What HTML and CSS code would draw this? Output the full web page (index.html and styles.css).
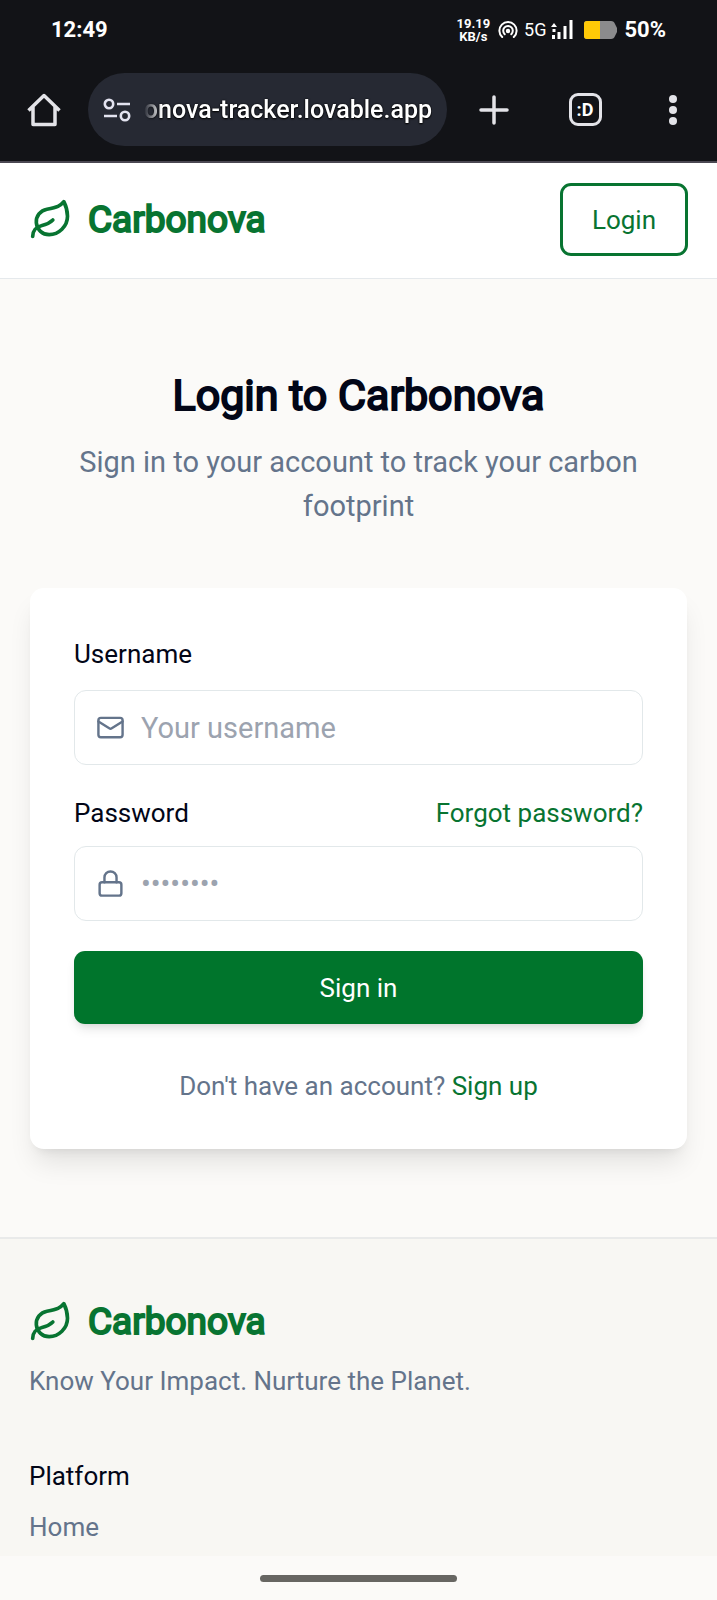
FILE: index.html
```html
<!DOCTYPE html>
<html lang="en">
<head>
<meta charset="utf-8">
<meta name="viewport" content="width=device-width, initial-scale=1">
<title>Login to Carbonova</title>
<link rel="stylesheet" href="styles.css">
</head>
<body>
<div class="chrome">
  <div class="status">
    <span class="clock">12:49</span>
    <div class="indicators">
      <span class="speed">19.19<br>KB/s</span>
      <svg class="hotspot" viewBox="0 0 20 18" fill="none" stroke="#fff" stroke-width="2" stroke-linecap="round"><path d="M4.200 16A8.600 8.600 0 1 1 15.800 16"/><path d="M6.700 13.200A4.800 4.800 0 1 1 13.300 13.200"/><circle cx="10" cy="10" r="1.200" fill="#fff"/></svg>
      <span class="network">5G</span>
      <svg class="signal" viewBox="0 0 22 20" fill="#fff"><path d="M0 7l3-4 3 4zM1.500 9h3v3h-3zM1 15h3v4H1zM6.500 12h3v7h-3zM12.500 6h3v13h-3zM18.500 0h3v19h-3z"/></svg>
      <svg class="battery" viewBox="0 0 34 18"><path fill="#8b8b8d" d="M3 0h24q3 0 4 3l2 4v4l-2 4q-1 3-4 3H3q-3 0-3-3V3q0-3 3-3z"/><path fill="#ffc907" d="M3 0h13v18H3q-3 0-3-3V3q0-3 3-3z"/></svg>
      <span class="percent">50%</span>
    </div>
  </div>
  <div class="toolbar">
    <button class="tool" aria-label="Home"><svg width="34" height="34" viewBox="0 0 34 34" fill="none" stroke="#e3e3e8" stroke-width="3.500" stroke-linejoin="round"><path d="M1.500 17.500L17 2.500l15.500 15M6 14v17.500h22V14"/></svg></button>
    <div class="address">
      <svg width="28" height="24" viewBox="0 0 28 24" fill="none" stroke="#e3e3f0" stroke-width="2.600"><circle cx="6" cy="6" r="4.200"/><path d="M14 6h13M1 18h13"/><circle cx="22" cy="18" r="4.200"/></svg>
      <span class="url">onova-tracker.lovable.app</span>
    </div>
    <button class="tool tool-wide" aria-label="New tab"><svg width="30" height="30" viewBox="0 0 30 30" stroke="#e3e3e8" stroke-width="3.500" stroke-linecap="round"><path d="M15 2v26M2 15h26"/></svg></button>
    <button class="tool" aria-label="Open tabs"><span class="tabs">:D</span></button>
    <button class="tool" aria-label="More options"><svg width="8" height="30" viewBox="0 0 8 30" fill="#e3e3e8"><circle cx="4" cy="4" r="4"/><circle cx="4" cy="15" r="4"/><circle cx="4" cy="26" r="4"/></svg></button>
  </div>
</div>

<header class="site-header">
  <a class="brand" href="#"><svg class="leaf" viewBox="0 0 24 24"><path d="M11 20A7 7 0 0 1 9.800 6.100C15.500 5 17 4.480 19 2c1 2 2 4.180 2 8 0 5.500-4.780 10-10 10Z"/><path d="M2 21c0-3 1.850-5.360 5.080-6C9.500 14.520 12 13 13 12"/></svg><span>Carbonova</span></a>
  <button class="login">Login</button>
</header>

<main class="main">
  <h1>Login to Carbonova</h1>
  <p class="subtitle">Sign in to your account to track your carbon footprint</p>
  <form class="card">
    <div class="label-row"><label for="username">Username</label></div>
    <div class="field">
      <svg class="field-icon" viewBox="0 0 24 24"><rect x="2" y="4" width="20" height="16" rx="2"/><path d="m22 7-8.970 5.700a1.940 1.940 0 0 1-2.060 0L2 7"/></svg>
      <input id="username" type="text" placeholder="Your username">
    </div>
    <div class="label-row password-row"><label for="password">Password</label><a href="#">Forgot password?</a></div>
    <div class="field">
      <svg class="field-icon" viewBox="0 0 24 24"><rect x="3" y="11" width="18" height="11" rx="2"/><path d="M7 11V7a5 5 0 0 1 10 0v4"/></svg>
      <input id="password" type="password" placeholder="••••••••">
    </div>
    <button class="submit" type="submit">Sign in</button>
    <p class="signup">Don't have an account? <a href="#">Sign up</a></p>
  </form>
</main>

<footer class="footer">
  <a class="brand" href="#"><svg class="leaf" viewBox="0 0 24 24"><path d="M11 20A7 7 0 0 1 9.800 6.100C15.500 5 17 4.480 19 2c1 2 2 4.180 2 8 0 5.500-4.780 10-10 10Z"/><path d="M2 21c0-3 1.850-5.360 5.080-6C9.500 14.520 12 13 13 12"/></svg><span>Carbonova</span></a>
  <p class="tagline">Know Your Impact. Nurture the Planet.</p>
  <h2>Platform</h2>
  <a class="footer-link" href="#">Home</a>
</footer>
<div class="gesture-bar"><span class="pill"></span></div>
</body>
</html>
```

FILE: styles.css
```css
:root {
  --green: #087431;
  --ink: #020617;
  --muted: #64748b;
  --line: #e5e9ec;
}

* { box-sizing: border-box; }

body {
  margin: 0;
  background: #fbfaf8;
  color: var(--ink);
  font: 26px/36px Roboto, sans-serif;
}

button, input { font: inherit; }
a { color: var(--green); text-decoration: none; }
h1, h2, p { margin: 0; }

/* Phone status bar and browser toolbar */
.chrome {
  background: #121317;
  border-bottom: 2px solid #4b4852;
  color: #fff;
}

.status {
  display: flex;
  align-items: center;
  justify-content: space-between;
  height: 60px;
  padding: 0 51px;
  font-size: 22px;
  font-weight: 700;
}

.indicators { display: flex; align-items: center; }
.speed { font-size: 13px; line-height: 13px; text-align: center; margin-right: 8px; }
.hotspot { width: 20px; height: 18px; margin-right: 6px; }
.network { font-size: 18px; font-weight: 400; margin-right: 5px; }
.signal { width: 22px; height: 20px; margin-right: 11px; }
.battery { width: 34px; height: 18px; margin-right: 6px; }

.toolbar {
  display: flex;
  align-items: center;
  padding: 13px 0 15px;
}

.tool {
  display: flex;
  flex: none;
  align-items: center;
  justify-content: center;
  width: 88px;
  height: 73px;
  padding: 0;
  border: 0;
  background: none;
  color: #fff;
}

.tool-wide { width: 94px; }

.address {
  display: flex;
  flex: 1;
  align-items: center;
  justify-content: space-between;
  min-width: 0;
  height: 73px;
  padding: 0 15px;
  border-radius: 37px;
  background: #262933;
}

.address svg { flex: none; }

.url {
  font-size: 25px;
  font-weight: 500;
  white-space: nowrap;
  text-shadow: 0 0 2px #000, 0 1px 2px #000;
  -webkit-mask-image: linear-gradient(to right, transparent, #000 18px);
  mask-image: linear-gradient(to right, transparent, #000 18px);
}

.tabs {
  display: flex;
  align-items: center;
  justify-content: center;
  width: 33px;
  height: 33px;
  border: 3px solid #e3e3e8;
  border-radius: 9px;
  font-size: 18px;
  font-weight: 700;
}

/* Site header */
.site-header {
  display: flex;
  align-items: center;
  justify-content: space-between;
  padding: 20px 29px 22px;
  border-bottom: 1px solid var(--line);
  background: #fff;
}

.brand {
  display: flex;
  align-items: center;
  gap: 15px;
  color: var(--green);
  font-size: 37px;
  line-height: 50px;
}

.brand span { -webkit-text-stroke: 2px currentColor; }

.leaf {
  width: 44px;
  height: 44px;
  fill: none;
  stroke: currentColor;
  stroke-width: 2;
  stroke-linecap: round;
  stroke-linejoin: round;
}

.login {
  height: 73px;
  padding: 0 29px;
  border: 3px solid var(--green);
  border-radius: 11px;
  background: #fff;
  color: var(--green);
}

/* Sign-in form */
.main { padding: 89px 30px 88px; }

h1 {
  font-size: 43px;
  font-weight: 400;
  line-height: 54px;
  text-align: center;
  -webkit-text-stroke: 2px currentColor;
}

.subtitle {
  margin: 18px 0 60px;
  color: var(--muted);
  font-size: 29px;
  line-height: 44px;
  text-align: center;
}

.card {
  padding: 48px 44px 45px;
  border-radius: 14px;
  background: #fff;
  box-shadow: 0 18px 27px -5px rgba(0, 0, 0, 0.1), 0 7px 11px -7px rgba(0, 0, 0, 0.1);
}

.label-row {
  display: flex;
  justify-content: space-between;
  margin-bottom: 18px;
}

.password-row { margin: 30px 0 15px; }

.field {
  display: flex;
  align-items: center;
  gap: 16px;
  height: 75px;
  padding: 0 21px;
  border: 1px solid #e2e8ea;
  border-radius: 12px;
}

.field:focus-within { border-color: var(--green); }

.field-icon {
  flex: none;
  width: 29px;
  height: 29px;
  fill: none;
  stroke: var(--muted);
  stroke-width: 2;
  stroke-linecap: round;
  stroke-linejoin: round;
}

.field input {
  flex: 1;
  min-width: 0;
  padding: 0;
  border: 0;
  outline: 0;
  background: none;
  color: var(--ink);
  font-size: 29px;
}

.field input::placeholder { color: #9ca3af; opacity: 1; }

.submit {
  display: block;
  width: 100%;
  height: 73px;
  margin: 30px 0 44px;
  border: 0;
  border-radius: 11px;
  background: #00752c;
  color: #fff;
  box-shadow: 0 7px 11px -2px rgba(0, 0, 0, 0.1), 0 4px 7px -4px rgba(0, 0, 0, 0.1);
}

.signup { color: var(--muted); text-align: center; }

/* Footer */
.footer {
  padding: 58px 29px 11px;
  border-top: 2px solid #e9eaea;
  background: #f8f7f3;
}

.tagline { margin: 16px 0 59px; color: var(--muted); }
h2 { margin-bottom: 15px; font-size: inherit; font-weight: 400; }
.footer-link { display: block; color: var(--muted); }

.gesture-bar {
  display: flex;
  align-items: center;
  justify-content: center;
  height: 44px;
}

.pill { width: 197px; height: 7px; border-radius: 4px; background: #676662; }
```
